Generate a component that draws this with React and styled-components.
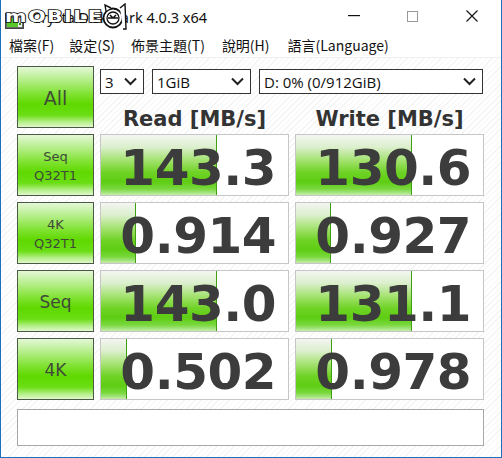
import styled, { createGlobalStyle } from 'styled-components';

const GlobalStyle = createGlobalStyle`
  html, body {
    margin: 0;
    padding: 0;
    background: #fff;
  }
  * {
    box-sizing: border-box;
  }
`;

const Window = styled.div`
  width: 502px;
  height: 458px;
  border: 1px solid #1f6fbf;
  border-top: none;
  display: flex;
  flex-direction: column;
  background: #fff;
  font-family: 'Noto Sans', 'Open Sans', sans-serif;
  overflow: hidden;
`;

const TitleBar = styled.div`
  position: relative;
  height: 32px;
  display: flex;
  align-items: center;
  padding-left: 4px;
  flex-shrink: 0;
`;

const TitleText = styled.span`
  margin-left: 8px;
  margin-top: 2px;
  font-size: 14.5px;
  color: #111;
`;

// watermark stamped over the title bar
const Watermark = styled.div`
  position: absolute;
  left: 4px;
  top: 3px;
  display: flex;
  align-items: center;
`;

const WatermarkText = styled.span`
  display: inline-block;
  font-family: 'DejaVu Sans', sans-serif;
  font-weight: bold;
  font-size: 15px;
  letter-spacing: 1px;
  color: #fff;
  -webkit-text-stroke: 1.5px #111;
  paint-order: stroke fill;
  transform: scaleX(1.38);
  transform-origin: left center;
  width: 97px;
`;

const Controls = styled.div`
  margin-left: auto;
  display: flex;
  align-self: stretch;
`;

const ControlButton = styled.div`
  width: 59px;
  display: flex;
  align-items: center;
  justify-content: center;
`;

const MenuBar = styled.div`
  height: 26px;
  display: flex;
  align-items: center;
  padding-left: 1px;
  border-bottom: 1px solid #f0f0f0;
  flex-shrink: 0;
`;

const MenuItem = styled.span`
  padding: 0 7px;
  margin-right: ${({ $gap }) => $gap || 0}px;
  font-family: 'Noto Sans CJK TC', 'Noto Sans', sans-serif;
  font-size: 14px;
  color: #111;
`;

const Main = styled.div`
  flex: 1;
  padding: 8px 17px 9px 16px;
  display: flex;
  flex-direction: column;
  background: repeating-linear-gradient(
    135deg,
    #ffffff 0px,
    #ffffff 3px,
    #f4f4f4 3px,
    #f4f4f4 4px
  );
`;

const Grid = styled.div`
  display: grid;
  grid-template-columns: 77px 189px 189px;
  grid-template-rows: 62px 62px 62px 62px 62px;
  column-gap: 6px;
  row-gap: 6px;
`;

const TestButton = styled.div`
  border: 1px solid #4b5a44;
  background: linear-gradient(
    to bottom,
    #e4f7d6 0%,
    #b4ee88 22%,
    #7fe230 45%,
    #5fd800 62%,
    #6ade14 80%,
    #b6f08c 92%,
    #e0f8cc 100%
  );
  display: flex;
  flex-direction: column;
  align-items: center;
  justify-content: center;
  color: #3f4a38;
  font-family: 'DejaVu Sans', sans-serif;
  font-size: ${({ $size }) => $size || 13}px;
  line-height: ${({ $size }) => ($size ? 22 : 19)}px;
  padding-top: 1px;
`;

const TopArea = styled.div`
  grid-column: 2 / span 2;
  display: flex;
  flex-direction: column;
`;

const SelectRow = styled.div`
  display: flex;
  gap: 8px;
  margin-top: 3px;
`;

const Select = styled.div`
  width: ${({ $w }) => $w}px;
  height: 25px;
  border: 1px solid #333;
  background: #fff;
  display: flex;
  align-items: center;
  justify-content: space-between;
  padding: 0 6px 0 4px;
  font-family: 'Open Sans', 'Noto Sans', sans-serif;
  font-size: 15px;
  color: #111;
`;

const Headers = styled.div`
  display: grid;
  grid-template-columns: 189px 189px;
  column-gap: 6px;
  flex: 1;
`;

const Header = styled.div`
  display: flex;
  align-items: center;
  justify-content: center;
  padding-top: 13px;
  font-family: 'DejaVu Sans', sans-serif;
  font-weight: bold;
  font-size: 21px;
  color: #333;
`;

const ResultCell = styled.div`
  position: relative;
  border: 1px solid #c6c6c6;
  background: #fff;
  overflow: hidden;
`;

const Bar = styled.div`
  position: absolute;
  left: 0;
  top: 0;
  bottom: 0;
  border-right: 1px solid #3f9f10;
  background: linear-gradient(
    to bottom,
    #f3f5f1 0%,
    #dcefcd 20%,
    #a4e270 42%,
    #6fd326 62%,
    #5ecd12 78%,
    #7ad83e 90%,
    #c2ecaa 100%
  );
`;

const Value = styled.div`
  position: relative;
  height: 100%;
  display: flex;
  align-items: center;
  justify-content: flex-end;
  padding: 6px 12px 0 0;
  font-family: 'DejaVu Sans', sans-serif;
  font-weight: bold;
  font-size: 50px;
  letter-spacing: -0.5px;
  color: #3c3c3c;
`;

const StatusBox = styled.div`
  margin-top: 9px;
  height: 37px;
  border: 1px solid #a8a8a8;
  background: #fff;
`;

function Chevron() {
  return (
    <svg width="13" height="9" viewBox="0 0 13 9">
      <path d="M1 1.5 L6.5 7 L12 1.5" fill="none" stroke="#222" strokeWidth="2" />
    </svg>
  );
}

function AppIcon() {
  return (
    <svg width="19" height="16" viewBox="0 0 19 16" style={{ marginTop: 10 }}>
      <rect x="0.5" y="0.5" width="18" height="15" fill="#6b6b6b" stroke="#444" />
      <rect x="2" y="5" width="15" height="9" fill="#ececec" />
      <rect x="2" y="5" width="11" height="9" fill="#58c928" />
      <rect x="14" y="10" width="2" height="2" fill="#2e8a10" />
    </svg>
  );
}

function Emblem() {
  return (
    <svg width="26" height="28" viewBox="0 0 26 28">
      <circle cx="11" cy="15" r="9.5" fill="#fff" stroke="#111" strokeWidth="1.8" />
      <circle cx="11" cy="15" r="6" fill="none" stroke="#111" strokeWidth="1.3" />
      <path d="M6 15 L16 15 M11 15 L8 12 M11 15 L14 12" stroke="#111" strokeWidth="1.5" fill="none" />
      <path d="M4 8 L3 2 L9 5" fill="#fff" stroke="#111" strokeWidth="1.4" />
      <path d="M18 5 L23 1 L24 26 L21 26" fill="#fff" stroke="#111" strokeWidth="1.4" />
    </svg>
  );
}

const rows = [
  { label: ['Seq', 'Q32T1'], read: '143.3', readPct: 62, write: '130.6', writePct: 62 },
  { label: ['4K', 'Q32T1'], read: '0.914', readPct: 18.5, write: '0.927', writePct: 18.5 },
  { label: ['Seq'], size: 17, read: '143.0', readPct: 62, write: '131.1', writePct: 62 },
  { label: ['4K'], size: 17, read: '0.502', readPct: 14, write: '0.978', writePct: 19 },
];

export default function App() {
  return (
    <>
      <GlobalStyle />
      <Window>
        <TitleBar>
          <AppIcon />
          <TitleText>CrystalDiskMark 4.0.3 x64</TitleText>
          <Watermark>
            <WatermarkText>mOBILE</WatermarkText>
            <Emblem />
          </Watermark>
          <Controls>
            <ControlButton>
              <svg width="12" height="2" viewBox="0 0 12 2">
                <rect width="12" height="1.2" fill="#111" />
              </svg>
            </ControlButton>
            <ControlButton>
              <svg width="11" height="11" viewBox="0 0 11 11">
                <rect x="0.5" y="0.5" width="10" height="10" fill="none" stroke="#999" />
              </svg>
            </ControlButton>
            <ControlButton>
              <svg width="12" height="12" viewBox="0 0 12 12">
                <path d="M0.5 0.5 L11.5 11.5 M11.5 0.5 L0.5 11.5" stroke="#111" strokeWidth="1.1" />
              </svg>
            </ControlButton>
          </Controls>
        </TitleBar>
        <MenuBar>
          <MenuItem $gap={1}>檔案(F)</MenuItem>
          <MenuItem $gap={2}>設定(S)</MenuItem>
          <MenuItem $gap={3}>佈景主題(T)</MenuItem>
          <MenuItem $gap={4}>說明(H)</MenuItem>
          <MenuItem>語言(Language)</MenuItem>
        </MenuBar>
        <Main>
          <Grid>
            <TestButton $size={19}>All</TestButton>
            <TopArea>
              <SelectRow>
                <Select $w={44}>
                  <span>3</span>
                  <Chevron />
                </Select>
                <Select $w={99}>
                  <span>1GiB</span>
                  <Chevron />
                </Select>
                <Select $w={224}>
                  <span>D: 0% (0/912GiB)</span>
                  <Chevron />
                </Select>
              </SelectRow>
              <Headers>
                <Header>Read [MB/s]</Header>
                <Header>Write [MB/s]</Header>
              </Headers>
            </TopArea>
            {rows.flatMap((r) => [
              <TestButton $size={r.size} key={r.read + 'b'}>
                {r.label.map((l) => (
                  <span key={l}>{l}</span>
                ))}
              </TestButton>,
              <ResultCell key={r.read + 'r'}>
                <Bar style={{ width: `${r.readPct}%` }} />
                <Value>{r.read}</Value>
              </ResultCell>,
              <ResultCell key={r.read + 'w'}>
                <Bar style={{ width: `${r.writePct}%` }} />
                <Value>{r.write}</Value>
              </ResultCell>,
            ])}
          </Grid>
          <StatusBox />
        </Main>
      </Window>
    </>
  );
}
